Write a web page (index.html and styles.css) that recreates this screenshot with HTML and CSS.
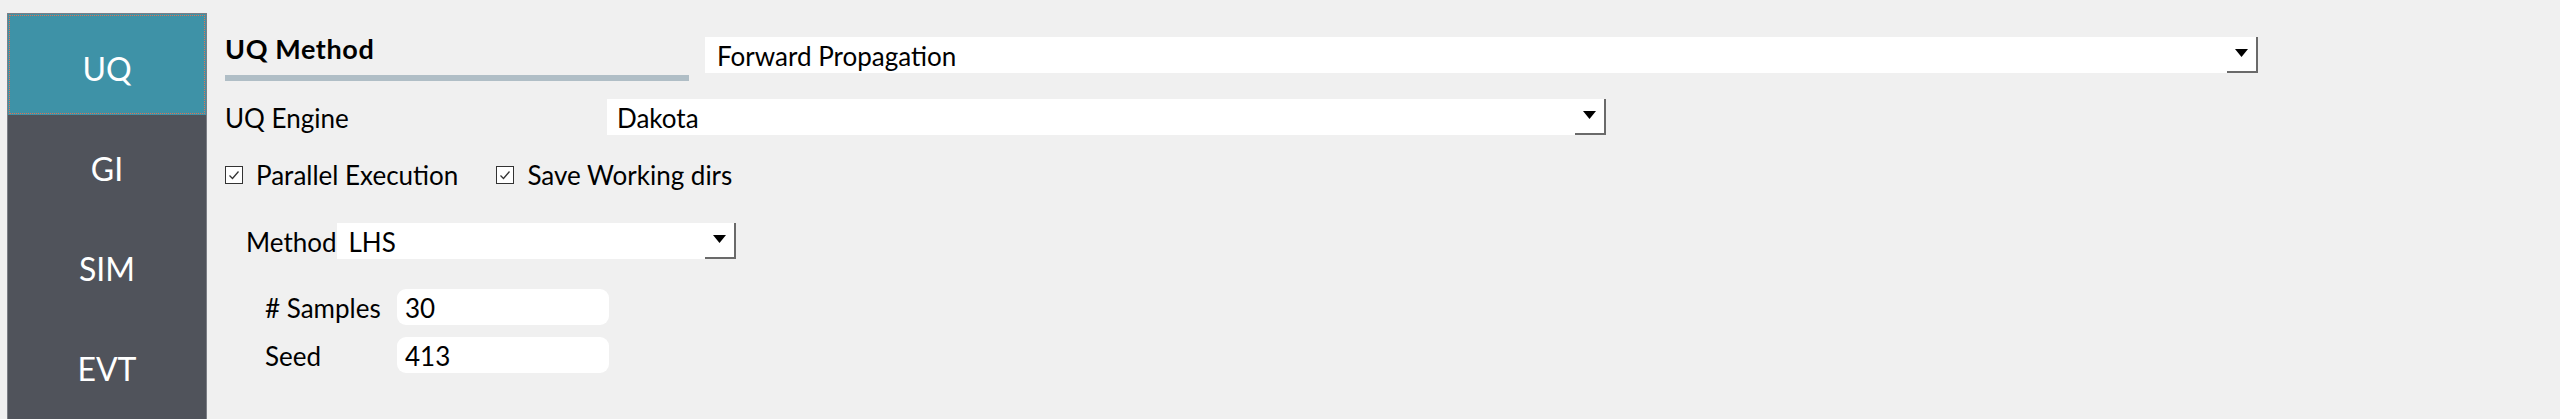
FILE: index.html
```html
<!DOCTYPE html>
<html lang="en">
<head>
<meta charset="utf-8">
<title>UQ</title>
<link rel="stylesheet" href="styles.css">
</head>
<body>
<div class="app">
  <nav class="sidebar">
    <div class="nav-item active">UQ</div>
    <div class="nav-item">GI</div>
    <div class="nav-item">SIM</div>
    <div class="nav-item">EVT</div>
  </nav>
  <main class="content">
    <div class="row-top">
      <div class="section-head">
        <div class="section-title">UQ Method</div>
        <div class="section-rule"></div>
      </div>
      <div class="combo combo-primary">
        <span class="combo-text">Forward Propagation</span>
        <span class="combo-btn"><svg width="13" height="8" viewBox="0 0 13 8"><path d="M0 0H13L6.5 8Z" fill="#000"/></svg></span>
      </div>
    </div>
    <div class="row-engine">
      <span class="field-label engine-label">UQ Engine</span>
      <div class="combo combo-engine">
        <span class="combo-text combo-text-tight">Dakota</span>
        <span class="combo-btn"><svg width="13" height="8" viewBox="0 0 13 8"><path d="M0 0H13L6.5 8Z" fill="#000"/></svg></span>
      </div>
    </div>
    <div class="row-checks">
      <label class="check">
        <span class="check-box"><svg width="16" height="16" viewBox="0 0 16 16"><polyline points="3.5,8.5 6.5,11.5 12.5,4.5" fill="none" stroke="#333" stroke-width="1.3"/></svg></span>
        <span class="check-text">Parallel Execution</span>
      </label>
      <label class="check">
        <span class="check-box"><svg width="16" height="16" viewBox="0 0 16 16"><polyline points="3.5,8.5 6.5,11.5 12.5,4.5" fill="none" stroke="#333" stroke-width="1.3"/></svg></span>
        <span class="check-text">Save Working dirs</span>
      </label>
    </div>
    <div class="row-method">
      <span class="field-label method-label">Method</span>
      <div class="combo combo-method">
        <span class="combo-text">LHS</span>
        <span class="combo-btn"><svg width="13" height="8" viewBox="0 0 13 8"><path d="M0 0H13L6.5 8Z" fill="#000"/></svg></span>
      </div>
    </div>
    <div class="params">
      <span class="field-label">&#35; Samples</span>
      <div class="text-input">30</div>
      <span class="field-label">Seed</span>
      <div class="text-input">413</div>
    </div>
  </main>
</div>
</body>
</html>
```

FILE: styles.css
```css
html, body {
  margin: 0;
  padding: 0;
}

body {
  background: #f0f0f0;
  font-family: Lato, "Open Sans", "DejaVu Sans", sans-serif;
  font-size: 26px;
  color: #000;
  height: 419px;
  overflow: hidden;
}

.app {
  display: flex;
  height: 100vh;
}

.sidebar {
  margin: 13px 0 0 7px;
  width: 200px;
  flex: 0 0 200px;
  box-sizing: border-box;
  border: 1px solid #7b7e85;
  border-bottom: 0;
  background: #50535b;
  display: flex;
  flex-direction: column;
}

.nav-item {
  height: 100px;
  flex: 0 0 auto;
  box-sizing: border-box;
  padding-top: 7px;
  display: flex;
  align-items: center;
  justify-content: center;
  color: #fff;
  font-size: 32px;
}

.nav-item.active {
  height: 101px;
  background: #3e92a7;
  outline: 1px dotted #e4704f;
  outline-offset: -2px;
}

.content {
  margin-left: 18px;
  padding-top: 31px;
  display: flex;
  flex-direction: column;
}

.row-top {
  display: flex;
  align-items: flex-start;
  gap: 16px;
}

.section-head {
  width: 464px;
}

.section-title {
  font-weight: 700;
  font-size: 27px;
  letter-spacing: 0.6px;
  line-height: 36px;
}

.section-rule {
  height: 6px;
  margin-top: 8px;
  background: #b0bec6;
}

.combo {
  display: flex;
  height: 36px;
  background: #fff;
}

.combo-primary {
  width: 1553px;
  margin-top: 6px;
}

.combo-engine {
  width: 999px;
}

.combo-text {
  flex: 1;
  padding: 3px 0 0 12px;
  line-height: 33px;
  white-space: nowrap;
}

.combo-text-tight {
  padding-left: 10px;
}

.combo-btn {
  width: 31px;
  box-sizing: border-box;
  border-right: 2px solid #6a6a6a;
  border-bottom: 2px solid #6a6a6a;
  display: flex;
  align-items: center;
  justify-content: center;
  padding-bottom: 2px;
}

.combo-btn svg {
  display: block;
}

.row-engine {
  margin-top: 18px;
  display: flex;
  align-items: center;
}

.field-label {
  padding-top: 3px;
  line-height: 33px;
  white-space: nowrap;
}

.engine-label {
  flex: 0 0 382px;
}

.row-checks {
  margin-top: 22px;
  height: 36px;
  display: flex;
  align-items: center;
  gap: 38px;
}

.check {
  display: flex;
  align-items: center;
  gap: 13px;
}

.check-box {
  width: 18px;
  height: 18px;
  box-sizing: border-box;
  border: 1px solid #333;
  background: #fff;
  display: flex;
  align-items: center;
  justify-content: center;
}

.check-text {
  line-height: 36px;
}

.row-method {
  margin-top: 30px;
  display: flex;
  align-items: center;
}

.method-label {
  flex: 0 0 95px;
  box-sizing: border-box;
  padding-left: 21px;
}

.combo-method {
  width: 399px;
}

.params {
  margin-top: 30px;
  padding-left: 40px;
  display: grid;
  grid-template-columns: 132px 212px;
  row-gap: 12px;
  align-items: center;
}

.text-input {
  height: 36px;
  box-sizing: border-box;
  background: #fff;
  border-radius: 9px;
  padding: 3px 0 0 8px;
  line-height: 33px;
}
```
